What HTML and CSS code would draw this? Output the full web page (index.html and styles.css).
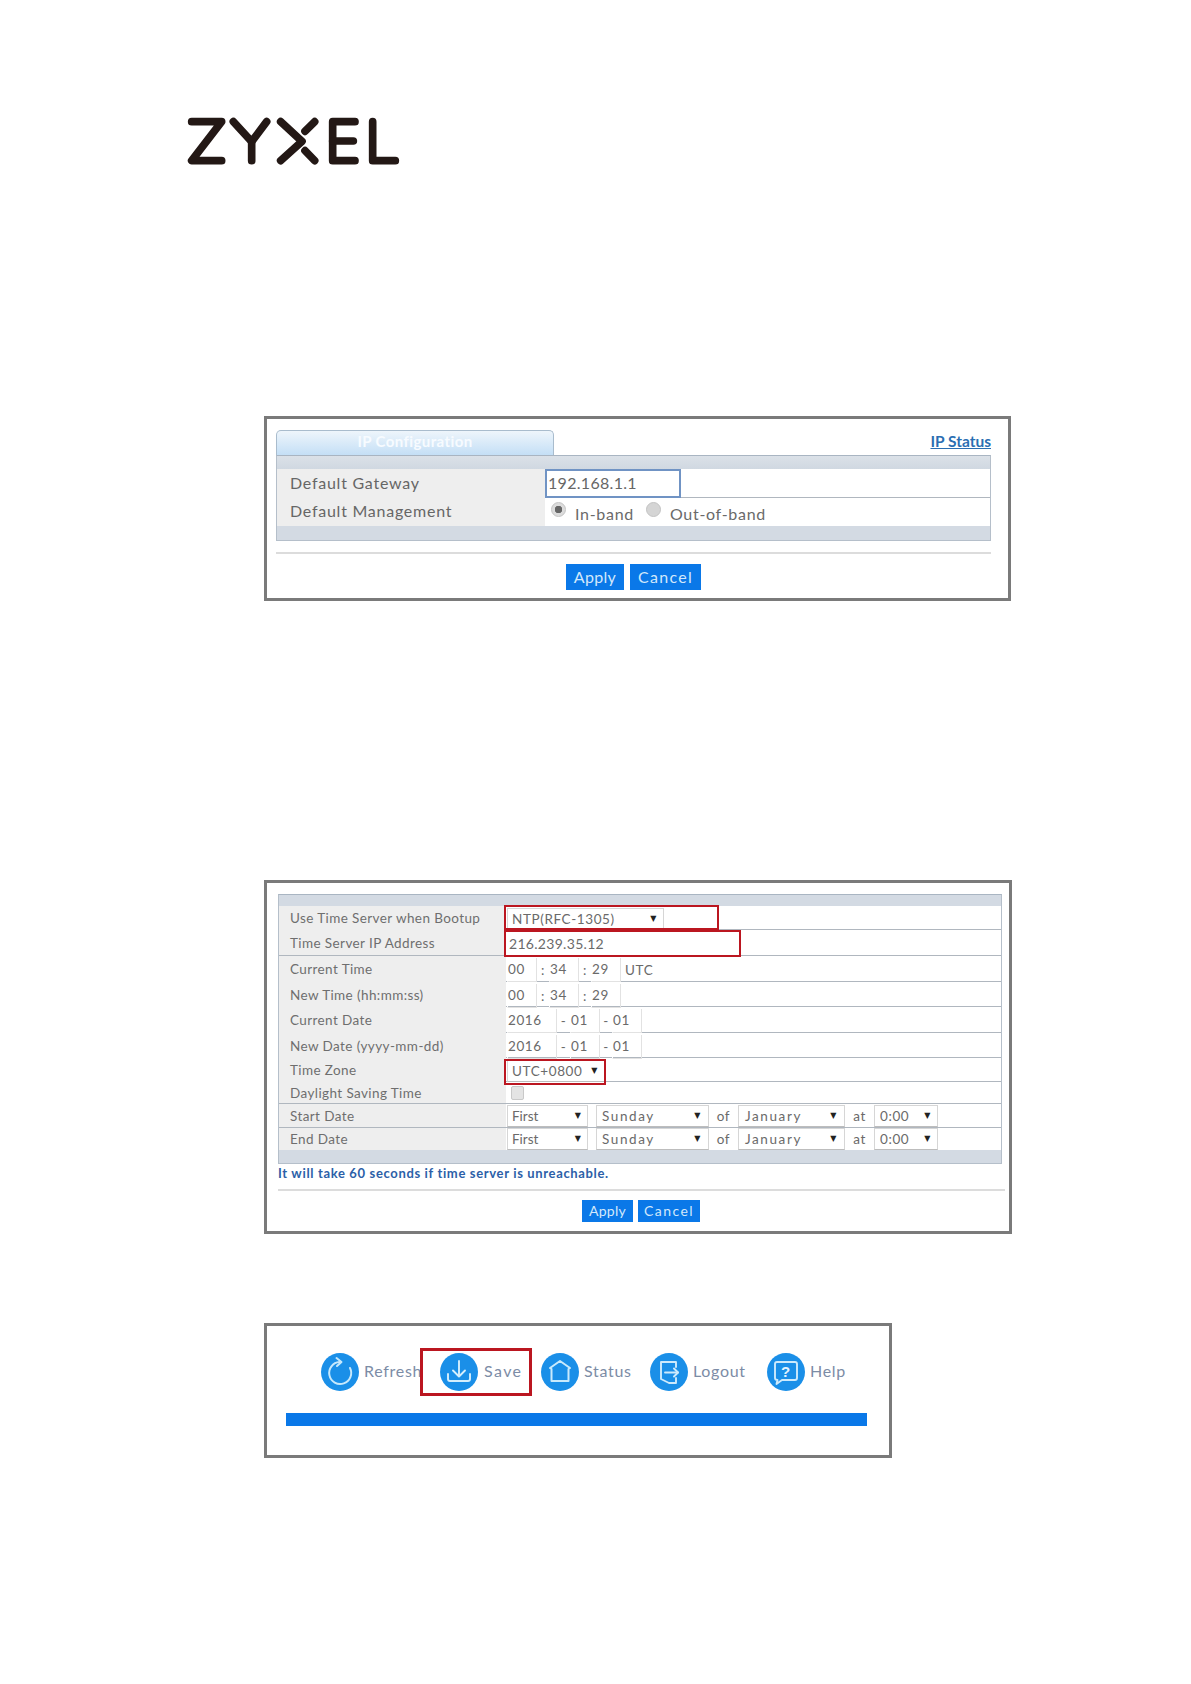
FILE: index.html
```html
<!DOCTYPE html>
<html lang="en">
<head>
<meta charset="utf-8">
<title>ZYXEL</title>
<link rel="stylesheet" href="styles.css">
</head>
<body>
<header class="logo">
  <svg class="logo-svg" viewBox="0 0 780 240" role="img" aria-label="ZYXEL">
    <g fill="none" stroke="#231815" stroke-width="23" stroke-linecap="round" stroke-linejoin="round">
      <polyline points="65,65 155,65 65,182 155,182"/>
      <polyline points="190,65 245,125 290,65"/>
      <line x1="245" y1="125" x2="245" y2="182"/>
      <polyline points="332,65 396,124 332,182"/>
      <line x1="434" y1="65" x2="405" y2="94"/>
      <line x1="405" y1="152" x2="434" y2="182"/>
      <polyline points="555,65 488,65 488,182 555,182"/>
      <line x1="488" y1="123" x2="550" y2="123"/>
      <polyline points="608,65 608,182 676,182"/>
    </g>
  </svg>
</header>

<section class="panel panel-ip">
  <div class="tabbar">
    <div class="tab">IP Configuration</div>
    <a class="status-link">IP Status</a>
  </div>
  <div class="table table-ip">
    <div class="band band-top"></div>
    <div class="row row-ip">
      <div class="label">Default Gateway</div>
      <div class="value"><div class="gateway">192.168.1.1</div></div>
    </div>
    <div class="row row-ip row-mgmt">
      <div class="label">Default Management</div>
      <div class="value radios">
        <span class="radio radio-on"></span><span class="radio-text">In-band</span>
        <span class="radio radio-off"></span><span class="radio-text">Out-of-band</span>
      </div>
    </div>
    <div class="band band-bottom"></div>
  </div>
  <hr class="rule">
  <div class="actions actions-ip">
    <button class="btn btn-apply">Apply</button>
    <button class="btn btn-cancel">Cancel</button>
  </div>
</section>

<section class="panel panel-time">
  <div class="table table-time">
    <div class="band band-small"></div>
    <div class="row row-time h24">
      <div class="label">Use Time Server when Bootup</div>
      <div class="value"><div class="select s-ntp">NTP(RFC-1305)<i class="arrow">▼</i></div><span class="mark mark-ntp"></span></div>
    </div>
    <div class="row row-time h26">
      <div class="label">Time Server IP Address</div>
      <div class="value"><span class="plain">216.239.35.12</span><span class="mark mark-ip"></span></div>
    </div>
    <div class="row row-time h26">
      <div class="label">Current Time</div>
      <div class="value"><span class="box b30">00</span><span class="sep">:</span><span class="box b30">34</span><span class="sep">:</span><span class="box b30">29</span><span class="utc">UTC</span></div>
    </div>
    <div class="row row-time h25">
      <div class="label">New Time (hh:mm:ss)</div>
      <div class="value"><span class="box b30">00</span><span class="sep">:</span><span class="box b30">34</span><span class="sep">:</span><span class="box b30">29</span></div>
    </div>
    <div class="row row-time h26">
      <div class="label">Current Date</div>
      <div class="value"><span class="box b50">2016</span><span class="sep sep-date">-</span><span class="box b30">01</span><span class="sep">-</span><span class="box b30">01</span></div>
    </div>
    <div class="row row-time h25">
      <div class="label">New Date (yyyy-mm-dd)</div>
      <div class="value"><span class="box b50">2016</span><span class="sep sep-date">-</span><span class="box b30">01</span><span class="sep">-</span><span class="box b30">01</span></div>
    </div>
    <div class="row row-time h24">
      <div class="label">Time Zone</div>
      <div class="value"><div class="select s-zone">UTC+0800<i class="arrow">▼</i></div><span class="mark mark-zone"></span></div>
    </div>
    <div class="row row-time h22">
      <div class="label">Daylight Saving Time</div>
      <div class="value"><span class="check"></span></div>
    </div>
    <div class="row row-time h24">
      <div class="label">Start Date</div>
      <div class="value">
        <div class="select s-first">First<i class="arrow">▼</i></div>
        <div class="select s-day">Sunday<i class="arrow">▼</i></div>
        <span class="word">of</span>
        <div class="select s-month">January<i class="arrow">▼</i></div>
        <span class="word">at</span>
        <div class="select s-hour">0:00<i class="arrow">▼</i></div>
      </div>
    </div>
    <div class="row row-time h22 row-last">
      <div class="label">End Date</div>
      <div class="value">
        <div class="select s-first">First<i class="arrow">▼</i></div>
        <div class="select s-day">Sunday<i class="arrow">▼</i></div>
        <span class="word">of</span>
        <div class="select s-month">January<i class="arrow">▼</i></div>
        <span class="word">at</span>
        <div class="select s-hour">0:00<i class="arrow">▼</i></div>
      </div>
    </div>
    <div class="band band-end"></div>
  </div>
  <p class="note">It will take 60 seconds if time server is unreachable.</p>
  <hr class="rule rule-time">
  <div class="actions actions-time">
    <button class="btn btn-small btn-apply2">Apply</button>
    <button class="btn btn-small btn-cancel2">Cancel</button>
  </div>
</section>

<section class="panel panel-tools">
  <nav class="tools">
    <div class="tool">
      <svg class="icon" viewBox="0 0 38 38"><circle cx="19" cy="19" r="19" fill="#1a8fe8"/><g fill="none" stroke="#c6e8fc" stroke-width="2" stroke-linecap="round" stroke-linejoin="round"><path d="M29 15 A11 11 0 1 1 18.5 9"/><path d="M15.5 5 L20.5 9 L16 13"/></g></svg>
      <span class="tool-text">Refresh</span>
    </div>
    <div class="tool tool-save">
      <svg class="icon" viewBox="0 0 38 38"><circle cx="19" cy="19" r="19" fill="#1a8fe8"/><g fill="none" stroke="#d5effd" stroke-width="1.9" stroke-linecap="round" stroke-linejoin="round"><path d="M19 8 V23"/><path d="M13 17.5 L19 23.5 L25 17.5"/><path d="M8 21 V26 Q8 28 10 28 H28 Q30 28 30 26 V21"/></g></svg>
      <span class="tool-text tool-text-save">Save</span>
      <span class="mark mark-save"></span>
    </div>
    <div class="tool">
      <svg class="icon" viewBox="0 0 38 38"><circle cx="19" cy="19" r="19" fill="#1a8fe8"/><path d="M19 8 L29 15 L27.5 16 V28 H10.5 V16 L9 15 Z" fill="none" stroke="#c9eafc" stroke-width="2" stroke-linejoin="round"/></svg>
      <span class="tool-text">Status</span>
    </div>
    <div class="tool">
      <svg class="icon" viewBox="0 0 38 38"><circle cx="19" cy="19" r="19" fill="#1a8fe8"/><g fill="none" stroke="#cdeafc" stroke-width="1.9" stroke-linecap="round" stroke-linejoin="round"><path d="M26 14 V9 H11 V26 L19 30 H26 V25"/><path d="M15 19.5 H28"/><path d="M24 15.5 L28 19.5 L24 23.5"/></g></svg>
      <span class="tool-text">Logout</span>
    </div>
    <div class="tool">
      <svg class="icon" viewBox="0 0 38 38"><circle cx="19" cy="19" r="19" fill="#1a8fe8"/><path d="M10 9 H28 Q30 9 30 11 V25 Q30 27 28 27 H15 L9.5 31 L10.5 27 Q8 27 8 25 V11 Q8 9 10 9 Z" fill="none" stroke="#cdeafc" stroke-width="1.9" stroke-linejoin="round"/><text class="help-q" x="19" y="24" text-anchor="middle">?</text></svg>
      <span class="tool-text">Help</span>
    </div>
  </nav>
  <div class="toolbar-line"></div>
</section>
</body>
</html>
```

FILE: styles.css
```css
* { box-sizing: border-box; }
html, body { margin: 0; padding: 0; background: #fff; }
body {
  font-family: "Lato", "Liberation Sans", sans-serif;
  color: #6b6b6b;
  height: 1684px;
  overflow: hidden;
}

.logo { padding: 100px 0 0 170px; height: 180px; }
.logo-svg { display: block; width: 260px; height: 80px; filter: blur(.3px); }

.panel {
  margin-left: 264px;
  background: #fff;
  border: 3px solid #7a7a7a;
}

/* IP panel */
.panel-ip { width: 747px; height: 185px; margin-top: 236px; padding: 11px 16px 0 9px; }
.tabbar { display: flex; justify-content: space-between; align-items: flex-end; height: 25px; }
.tab {
  width: 278px;
  height: 25px;
  padding-top: 1px;
  text-align: center;
  border: 1px solid #a9bccd;
  border-bottom: 0;
  border-radius: 5px 5px 0 0;
  background: linear-gradient(#eef5fb, #c4dff6);
  color: #f7fbff;
  font-size: 15px;
  font-weight: 700;
  letter-spacing: .4px;
}
.status-link {
  color: #2a6eb2;
  font-size: 15.5px;
  font-weight: 700;
  line-height: 20px;
  margin: 0 1px 4px 0;
  text-decoration: underline;
}

.table { border: 1px solid #b5bfca; border-top-color: #a9b5c2; }
.table-ip { width: 715px; }
.band { background: #d3dae3; }
.band-top { height: 13px; background: linear-gradient(#dbe1e8, #d0d8e1); }
.band-bottom { height: 14px; }
.band-small { height: 11px; }
.band-end { height: 13px; }

.row { display: grid; border-bottom: 1px solid #b0b7bf; }
.row-ip { grid-template-columns: 268px 1fr; height: 29px; }
.row-mgmt { height: 28px; border-bottom: 0; }
.label {
  background: #eeeeee;
  display: flex;
  align-items: center;
}
.value { display: flex; align-items: center; position: relative; }

.row-ip .label { padding: 0 0 2px 13px; font-size: 16px; letter-spacing: .75px; color: #666; }
.row-mgmt .label { padding-bottom: 3px; }
.gateway {
  width: 136px;
  height: 29px;
  border: 2px solid #7093c4;
  padding-left: 1px;
  font-size: 16px;
  line-height: 24px;
  letter-spacing: .3px;
  color: #666;
}
.radios { font-size: 16px; letter-spacing: .7px; color: #6a6a6a; padding-left: 6px; }
.radio {
  width: 15px;
  height: 15px;
  border-radius: 50%;
  border: 1px solid #c3c3c3;
  background: #e3e3e3;
  margin-bottom: 5px;
  flex: none;
}
.radio-on { background: radial-gradient(circle, #666 0 3.5px, #dcdcdc 4px); }
.radio-off { background: #d5d5d5; }
.radio-text { margin: 2px 12px 0 9px; }

.rule { margin: 11px 0 0; height: 2px; width: 715px; border: 0; background: #dcdcdc; }

.actions { display: flex; }
.actions-ip { margin: 10px 0 0 290px; gap: 6px; }
.btn {
  border: 0;
  padding: 0 0 2px;
  background: #0a78e8;
  color: #d3e8fb;
  font-family: inherit;
  font-size: 16px;
  letter-spacing: .3px;
  height: 26px;
}
.btn-apply { width: 58px; }
.btn-cancel { width: 71px; letter-spacing: 1.3px; }

/* Time panel */
.panel-time { width: 748px; height: 354px; margin-top: 279px; padding: 11px 0 0 11px; }
.table-time { width: 724px; }
.row-time { grid-template-columns: 227px 1fr; font-size: 13.5px; }
.row-time .label { padding-left: 11px; letter-spacing: .4px; color: #6e6e6e; }
.row-last { border-bottom: 0; }
.h22 { height: 22px; }
.h24 { height: 24px; }
.h25 { height: 25px; }
.h26 { height: 26px; }
.row-time .value { padding-left: 1px; letter-spacing: .6px; color: #6a6a6a; }
.select {
  position: relative;
  height: 22px;
  line-height: 20px;
  padding-left: 4px;
  border: 1px solid #d6d6d6;
  border-bottom-color: #bdbdbd;
  flex: none;
  background: #fff;
}
.arrow {
  position: absolute;
  right: 6px;
  top: 0;
  font-family: "DejaVu Sans", sans-serif;
  font-style: normal;
  font-size: 8px;
  color: #222;
}
.s-ntp { width: 157px; margin-top: 2px; }
.s-zone { width: 98px; margin-top: 2px; }
.row-time .s-first { width: 81px; margin-right: 8px; letter-spacing: 0; }
.row-time .s-day { width: 113px; padding-left: 5px; letter-spacing: 1.6px; }
.row-time .s-month { width: 107px; padding-left: 6px; letter-spacing: 1.6px; }
.s-hour { width: 64px; padding-left: 5px; }
.word { width: 29px; text-align: center; flex: none; }
.plain { margin-top: 2px; padding-left: 2px; letter-spacing: .3px; font-size: 14px; }
.box {
  height: 24px;
  margin-top: 2px;
  line-height: 22px;
  border: 1px solid #e2e2e2;
  border-width: 0 1px 1px 1px;
  border-left-color: #fff;
  flex: none;
}
.b30 { width: 30px; }
.b50 { width: 50px; }
.sep { width: 12px; margin-top: 2px; text-align: center; flex: none; }
.sep-date { width: 13px; }
.utc { margin: 2px 0 0 4px; }
.check {
  width: 13px;
  height: 14px;
  margin-left: 4px;
  border: 1px solid #c9c9c9;
  border-radius: 2px;
  background: #e4e4e4;
}
.mark { position: absolute; border: 2px solid #bb1620; pointer-events: none; }
.mark-ntp { left: -2px; top: -1px; width: 215px; height: 25px; }
.mark-ip { left: -2px; top: 0; width: 237px; height: 27px; }
.mark-zone { left: -2px; top: 1px; width: 102px; height: 26px; }
.note {
  margin: 1px 0 0;
  font-size: 13px;
  line-height: 16px;
  font-weight: 700;
  letter-spacing: .65px;
  color: #2c5fa8;
}
.rule-time { margin-top: 8px; width: 727px; }
.actions-time { margin: 9px 0 0 304px; gap: 5px; }
.btn-small { height: 22px; font-size: 14px; }
.btn-apply2 { width: 51px; }
.btn-cancel2 { width: 62px; letter-spacing: 1.4px; }

/* Toolbar panel */
.panel-tools { width: 628px; height: 135px; margin-top: 89px; padding: 27px 0 0 19px; }
.tools { display: grid; grid-template-columns: 119px 101px 109px 117px auto; margin-left: 35px; width: 530px; }
.tool {
  position: relative;
  display: flex;
  align-items: center;
  gap: 5px;
  height: 38px;
  font-size: 16px;
  letter-spacing: .7px;
  color: #7c8ca6;
}
.tool-text { padding-bottom: 4px; }
.tool-text-save { letter-spacing: 1.4px; margin-left: 1px; }
.icon { width: 38px; height: 38px; flex: none; }
.help-q { font-family: "Liberation Sans", sans-serif; font-weight: 700; font-size: 15px; fill: #e5f4fe; }
.mark-save { left: -20px; top: -5px; width: 112px; height: 48px; border-width: 3px; }
.toolbar-line { margin-top: 22px; width: 581px; height: 13px; background: #0a78e8; }
```
